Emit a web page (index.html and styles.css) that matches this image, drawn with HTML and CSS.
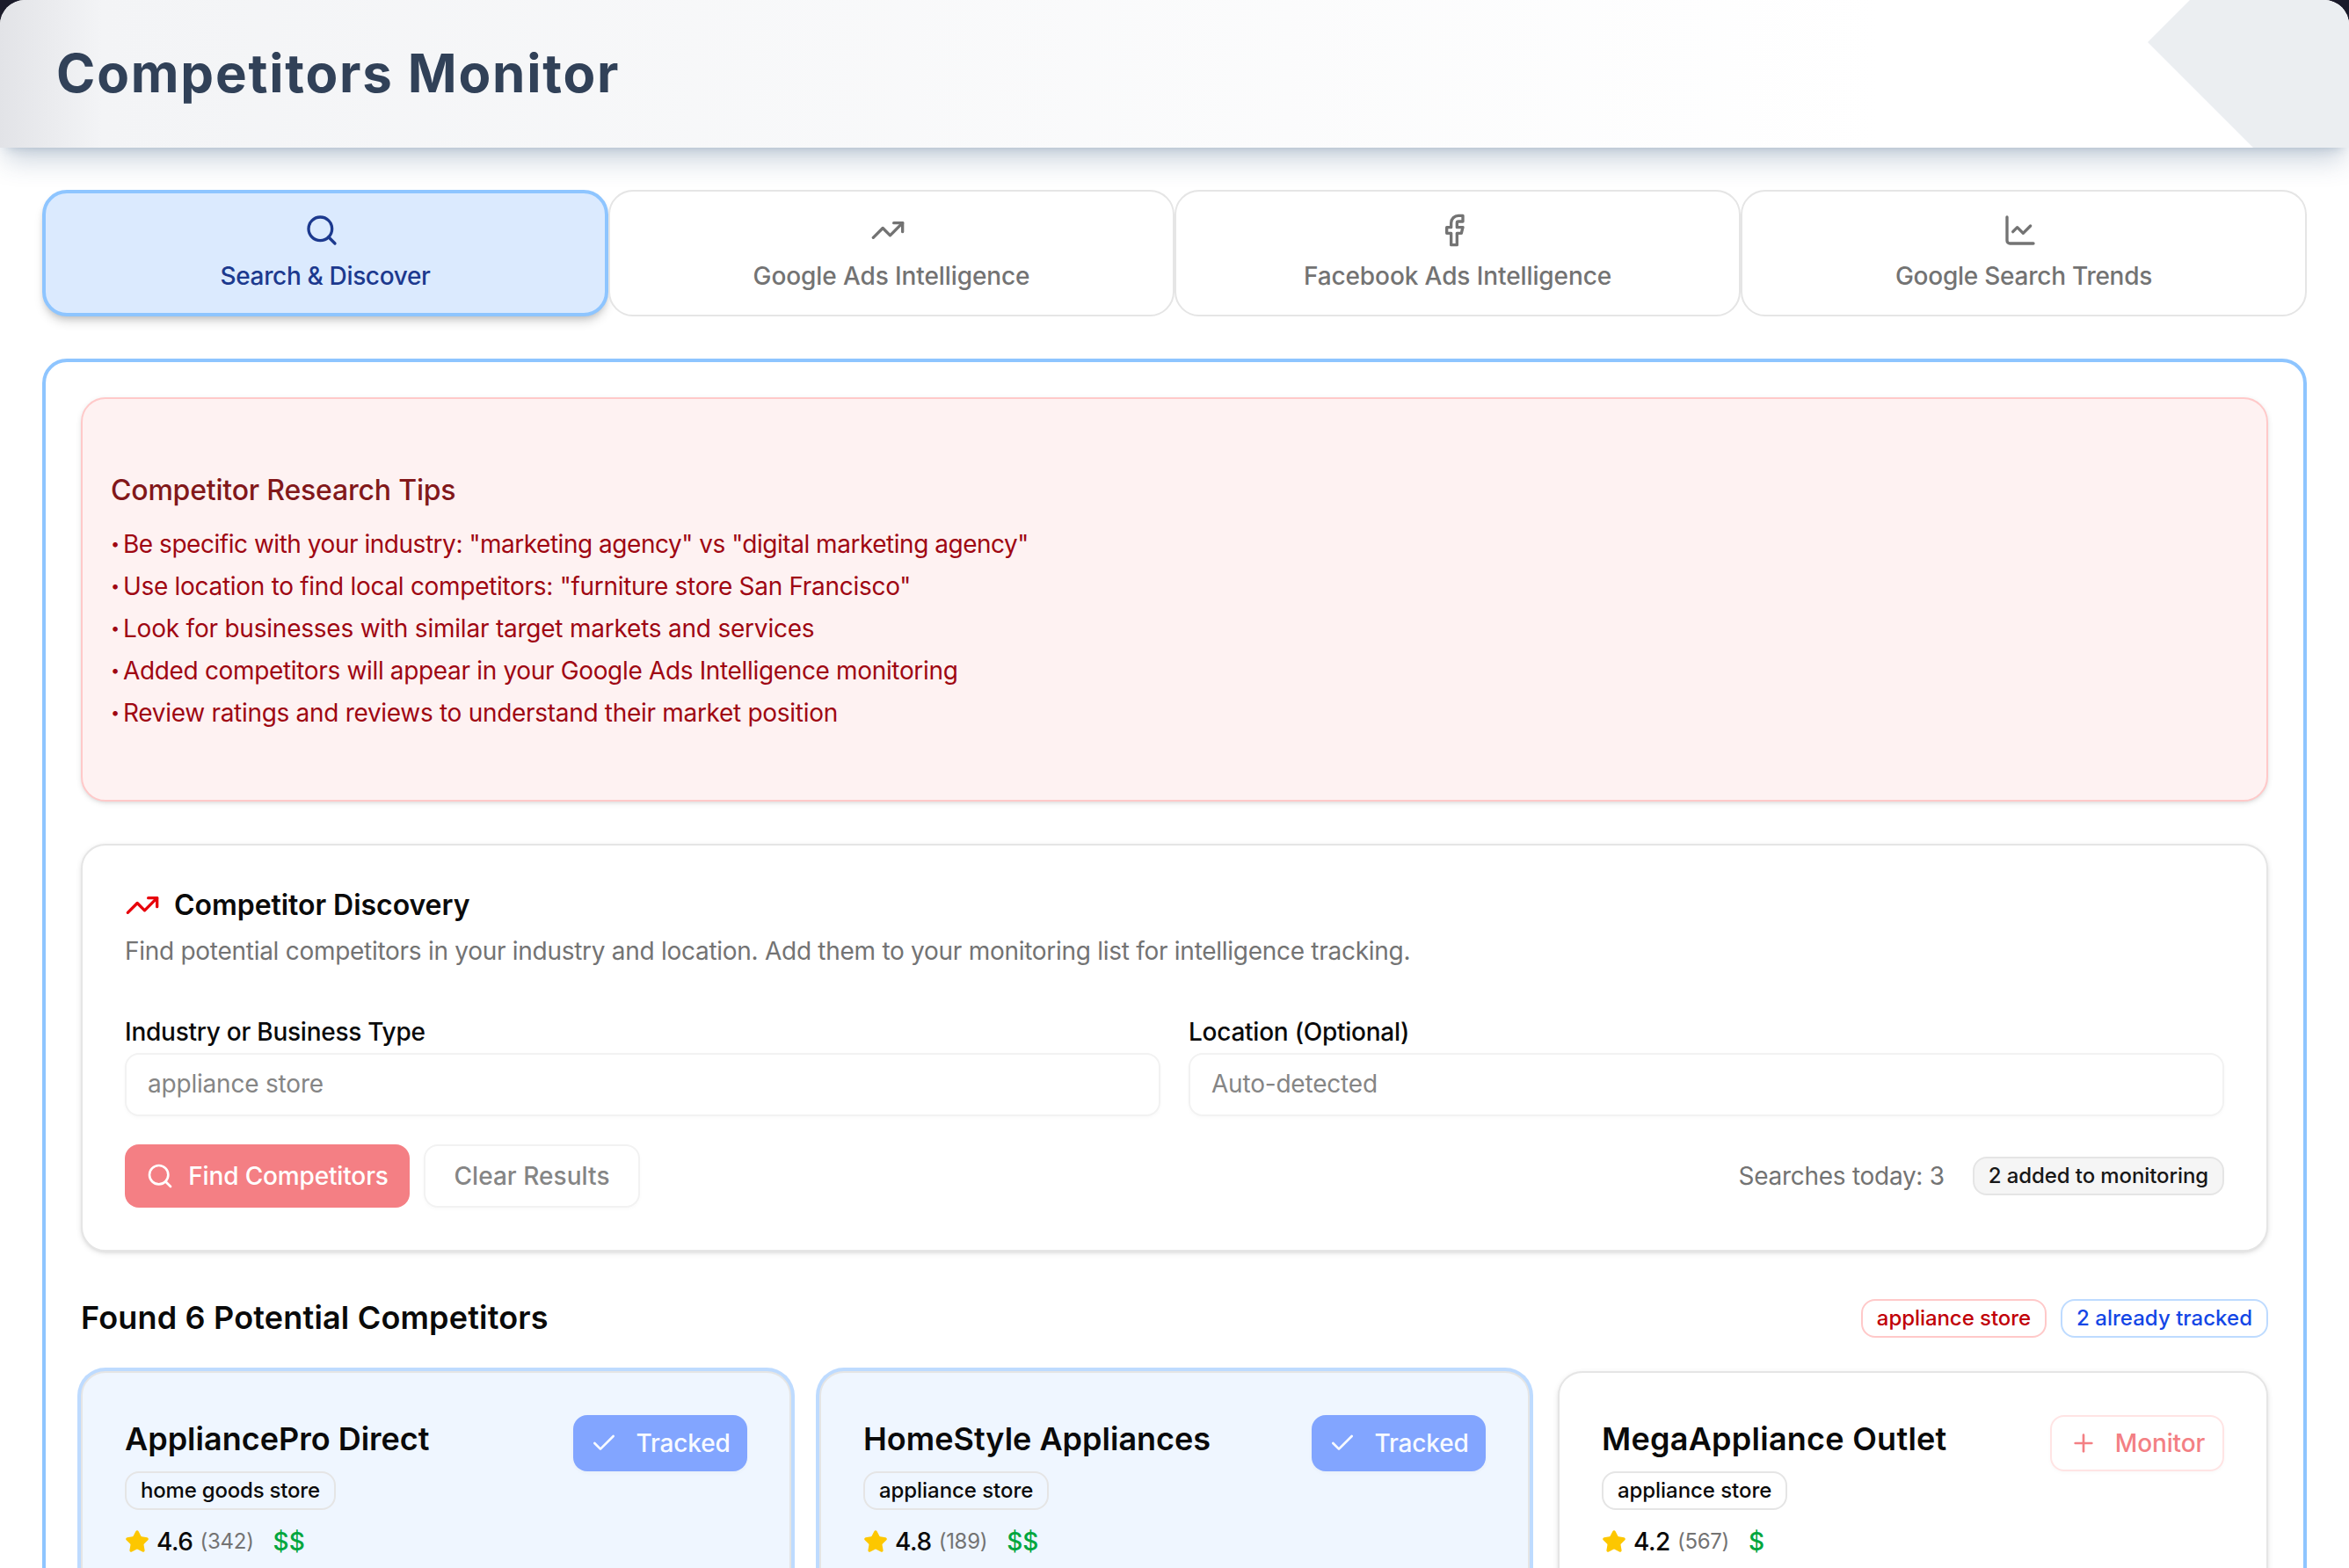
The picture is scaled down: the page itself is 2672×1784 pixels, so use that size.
FILE: index.html
```html
<!DOCTYPE html>
<html lang="en">
<head>
    <meta charset="UTF-8">
    <meta name="viewport" content="width=device-width, initial-scale=1.0">
    <title>Competitors Monitor</title>
    <link rel="stylesheet" href="styles.css">
</head>
<body>
<div class="page">
    <header class="header">
        <h1>Competitors Monitor</h1>
        <div class="header-shape"></div>
    </header>

    <main class="main">
        <nav class="tabs">
            <button class="tab active">
                <svg class="icon" viewBox="0 0 24 24"><circle cx="11" cy="11" r="8"/><path d="m21 21-4.34-4.34"/></svg>
                <span>Search &amp; Discover</span>
            </button>
            <button class="tab">
                <svg class="icon" viewBox="0 0 24 24"><path d="M16 7h6v6"/><path d="m22 7-8.5 8.5-5-5L2 17"/></svg>
                <span>Google Ads Intelligence</span>
            </button>
            <button class="tab">
                <svg class="icon" viewBox="0 0 24 24"><path d="M18 2h-3a5 5 0 0 0-5 5v3H7v4h3v8h4v-8h3l1-4h-4V7a1 1 0 0 1 1-1h3z"/></svg>
                <span>Facebook Ads Intelligence</span>
            </button>
            <button class="tab tab-trends">
                <svg class="icon" viewBox="0 0 24 24"><path d="M3 3v16a2 2 0 0 0 2 2h16"/><path d="m19 9-5 5-4-4-3 3"/></svg>
                <span>Google Search Trends</span>
            </button>
        </nav>

        <section class="panel">
            <div class="tips">
                <h2>Competitor Research Tips</h2>
                <ul>
                    <li class="tip-1"><span class="dot">•</span>Be specific with your industry: "marketing agency" vs "digital marketing agency"</li>
                    <li class="tip-2"><span class="dot">•</span>Use location to find local competitors: "furniture store San Francisco"</li>
                    <li class="tip-3"><span class="dot">•</span>Look for businesses with similar target markets and services</li>
                    <li class="tip-4"><span class="dot">•</span>Added competitors will appear in your Google Ads Intelligence monitoring</li>
                    <li class="tip-5"><span class="dot">•</span>Review ratings and reviews to understand their market position</li>
                </ul>
            </div>

            <div class="card discovery">
                <div class="discovery-title">
                    <svg class="icon" viewBox="0 0 24 24"><path d="M16 7h6v6"/><path d="m22 7-8.5 8.5-5-5L2 17"/></svg>
                    <h3>Competitor Discovery</h3>
                </div>
                <p class="discovery-text">Find potential competitors in your industry and location. Add them to your monitoring list for intelligence tracking.</p>
                <div class="fields">
                    <div class="field">
                        <label for="industry">Industry or Business Type</label>
                        <input id="industry" type="text" value="appliance store" disabled>
                    </div>
                    <div class="field">
                        <label for="location">Location (Optional)</label>
                        <input id="location" type="text" value="Auto-detected" disabled>
                    </div>
                </div>
                <div class="actions">
                    <button class="btn btn-find">
                        <svg class="icon small" viewBox="0 0 24 24"><circle cx="11" cy="11" r="8"/><path d="m21 21-4.34-4.34"/></svg>
                        <span>Find Competitors</span>
                    </button>
                    <button class="btn btn-clear"><span>Clear Results</span></button>
                    <span class="searches">Searches today: 3</span>
                    <span class="badge gray">2 added to monitoring</span>
                </div>
            </div>

            <div class="results-header">
                <h2>Found 6 Potential Competitors</h2>
                <div class="results-badges">
                    <span class="badge red">appliance store</span>
                    <span class="badge blue">2 already tracked</span>
                </div>
            </div>

            <div class="results">
                <div class="card result tracked">
                    <div class="result-info">
                        <h3>AppliancePro Direct</h3>
                        <span class="badge goods">home goods store</span>
                        <div class="rating">
                            <svg class="star" viewBox="0 0 24 24"><path d="M11.525 2.295a.53.53 0 0 1 .95 0l2.31 4.679a2.123 2.123 0 0 0 1.595 1.16l5.166.756a.53.53 0 0 1 .294.904l-3.736 3.638a2.123 2.123 0 0 0-.611 1.878l.882 5.14a.53.53 0 0 1-.771.56l-4.618-2.428a2.122 2.122 0 0 0-1.973 0L6.396 21.01a.53.53 0 0 1-.77-.56l.881-5.139a2.122 2.122 0 0 0-.611-1.879L2.16 9.795a.53.53 0 0 1 .294-.906l5.165-.755a2.122 2.122 0 0 0 1.597-1.16z"/></svg>
                            <span class="score">4.6</span>
                            <span class="count">(342)</span>
                            <span class="price">$$</span>
                        </div>
                    </div>
                    <button class="btn btn-tracked">
                        <svg class="icon small" viewBox="0 0 24 24"><path d="M20 6 9 17l-5-5"/></svg>
                        <span>Tracked</span>
                    </button>
                </div>

                <div class="card result tracked">
                    <div class="result-info">
                        <h3>HomeStyle Appliances</h3>
                        <span class="badge">appliance store</span>
                        <div class="rating">
                            <svg class="star" viewBox="0 0 24 24"><path d="M11.525 2.295a.53.53 0 0 1 .95 0l2.31 4.679a2.123 2.123 0 0 0 1.595 1.16l5.166.756a.53.53 0 0 1 .294.904l-3.736 3.638a2.123 2.123 0 0 0-.611 1.878l.882 5.14a.53.53 0 0 1-.771.56l-4.618-2.428a2.122 2.122 0 0 0-1.973 0L6.396 21.01a.53.53 0 0 1-.77-.56l.881-5.139a2.122 2.122 0 0 0-.611-1.879L2.16 9.795a.53.53 0 0 1 .294-.906l5.165-.755a2.122 2.122 0 0 0 1.597-1.16z"/></svg>
                            <span class="score">4.8</span>
                            <span class="count">(189)</span>
                            <span class="price">$$</span>
                        </div>
                    </div>
                    <button class="btn btn-tracked">
                        <svg class="icon small" viewBox="0 0 24 24"><path d="M20 6 9 17l-5-5"/></svg>
                        <span>Tracked</span>
                    </button>
                </div>

                <div class="card result">
                    <div class="result-info">
                        <h3 class="wide">MegaAppliance Outlet</h3>
                        <span class="badge">appliance store</span>
                        <div class="rating">
                            <svg class="star" viewBox="0 0 24 24"><path d="M11.525 2.295a.53.53 0 0 1 .95 0l2.31 4.679a2.123 2.123 0 0 0 1.595 1.16l5.166.756a.53.53 0 0 1 .294.904l-3.736 3.638a2.123 2.123 0 0 0-.611 1.878l.882 5.14a.53.53 0 0 1-.771.56l-4.618-2.428a2.122 2.122 0 0 0-1.973 0L6.396 21.01a.53.53 0 0 1-.77-.56l.881-5.139a2.122 2.122 0 0 0-.611-1.879L2.16 9.795a.53.53 0 0 1 .294-.906l5.165-.755a2.122 2.122 0 0 0 1.597-1.16z"/></svg>
                            <span class="score">4.2</span>
                            <span class="count">(567)</span>
                            <span class="price">$</span>
                        </div>
                    </div>
                    <button class="btn btn-monitor">
                        <svg class="icon small" viewBox="0 0 24 24"><path d="M5 12h14"/><path d="M12 5v14"/></svg>
                        <span>Monitor</span>
                    </button>
                </div>
            </div>
        </section>
    </main>
</div>
</body>
</html>
```
FILE: styles.css
```css
* {
    box-sizing: border-box;
    margin: 0;
    padding: 0;
}

body {
    height: 1784px;
    overflow: hidden;
    background: #1b1b2a;
    font-family: Inter, "Liberation Sans", sans-serif;
    font-size: 28px;
    line-height: 40px;
    color: #0a0a0a;
}

button,
input {
    font: inherit;
    letter-spacing: inherit;
}

.page {
    height: 1784px;
    overflow: hidden;
    background: #fff;
    border-radius: 28px 28px 0 0;
}

.icon {
    width: 40px;
    height: 40px;
    flex-shrink: 0;
    fill: none;
    stroke: currentColor;
    stroke-width: 2;
    stroke-linecap: round;
    stroke-linejoin: round;
}

.icon.small {
    width: 32px;
    height: 32px;
}

/* header */
.header {
    display: flex;
    justify-content: space-between;
    height: 168px;
    padding-left: 64px;
    border-radius: 28px 28px 0 0;
    background: linear-gradient(90deg, #e2e3e7 0, #f3f4f6 116px, #fff 80%);
    box-shadow: 0 20px 30px -6px rgba(49, 85, 125, 0.25), 0 8px 12px -8px rgba(49, 85, 125, 0.25);
    overflow: hidden;
}

.header h1 {
    font-size: 60px;
    line-height: 72px;
    font-weight: 700;
    letter-spacing: 1.8px;
    color: #314158;
    padding-top: 47px;
}

.header-shape {
    width: 229px;
    background: #ebeef1;
    clip-path: polygon(48px 0, 100% 0, 100% 100%, 120px 100%, 0 48px);
}

.main {
    padding: 48px 48px 0;
}

/* tabs */
.tabs {
    display: grid;
    grid-template-columns: repeat(4, 1fr);
    margin-bottom: 48px;
}

.tab {
    display: flex;
    flex-direction: column;
    align-items: center;
    justify-content: center;
    gap: 12px;
    height: 144px;
    border: 2px solid #e5e5e5;
    border-radius: 28px;
    background: #fff;
    color: #737373;
    font-weight: 500;
    letter-spacing: -0.1px;
}

.tab .icon {
    margin-right: 8px;
}

.tab.active {
    border: 4px solid #8ec5ff;
    background: #dbeafe;
    color: #1c398e;
    letter-spacing: -0.35px;
    box-shadow: 0 8px 12px -2px rgba(0, 0, 0, 0.15), 0 4px 8px -4px rgba(0, 0, 0, 0.2);
}

.tab-trends {
    letter-spacing: -0.25px;
}

.panel {
    height: 1500px;
    padding: 40px;
    border: 4px solid #8ec5ff;
    border-radius: 28px;
}

/* research tips */
.tips {
    height: 460px;
    padding: 80px 32px 0;
    border: 2px solid #ffc9c9;
    border-radius: 28px;
    background: #fef2f2;
    box-shadow: 0 2px 6px rgba(0, 0, 0, 0.1), 0 2px 4px -2px rgba(0, 0, 0, 0.1);
    color: #9f0712;
}

.tips h2 {
    font-size: 32px;
    line-height: 48px;
    font-weight: 500;
    letter-spacing: -0.2px;
    color: #82181a;
}

.tips ul {
    display: flex;
    flex-direction: column;
    gap: 8px;
    margin-top: 17px;
    list-style: none;
}

.tips li {
    display: flex;
    letter-spacing: -0.3px;
}

.tips .tip-1 {
    letter-spacing: -0.47px;
}

.tips .tip-3 {
    letter-spacing: -0.22px;
}

.tips .tip-4 {
    letter-spacing: -0.34px;
}

.dot {
    width: 14px;
    font-size: 18px;
}

.card {
    border: 2px solid #e5e5e5;
    border-radius: 28px;
    background: #fff;
    padding: 48px;
    box-shadow: 0 2px 6px rgba(0, 0, 0, 0.1), 0 2px 4px -2px rgba(0, 0, 0, 0.1);
}

/* discovery form */
.discovery {
    margin-top: 48px;
}

.discovery-title {
    display: flex;
    align-items: center;
    gap: 16px;
    color: #e7000b;
}

.discovery-title h3 {
    font-size: 32px;
    line-height: 40px;
    font-weight: 600;
    letter-spacing: -0.05px;
    color: #0a0a0a;
}

.discovery-text {
    margin-top: 12px;
    letter-spacing: -0.28px;
    color: #737373;
}

.fields {
    display: grid;
    grid-template-columns: 1fr 1fr;
    gap: 32px;
    margin-top: 52px;
}

.field label {
    display: block;
    margin-bottom: 4px;
    font-weight: 500;
    letter-spacing: -0.25px;
}

.field input {
    display: block;
    width: 100%;
    height: 72px;
    padding: 0 24px 2px;
    border: 2px solid #f2f2f2;
    border-radius: 16px;
    background: #fff;
    color: #858585;
    letter-spacing: -0.2px;
    box-shadow: 0 2px 4px rgba(0, 0, 0, 0.025);
}

.actions {
    display: flex;
    align-items: center;
    margin-top: 32px;
}

.btn {
    display: flex;
    align-items: center;
    justify-content: center;
    flex-shrink: 0;
    border: none;
    border-radius: 16px;
    font-weight: 500;
    white-space: nowrap;
}

.btn-find {
    width: 324px;
    height: 72px;
    gap: 16px;
    background: #f47f84;
    color: #fff;
    letter-spacing: -0.15px;
}

.btn-clear {
    width: 246px;
    height: 72px;
    margin-left: 16px;
    border: 2px solid #f2f2f2;
    background: #fff;
    color: #858585;
    letter-spacing: 0.05px;
    box-shadow: 0 2px 4px rgba(0, 0, 0, 0.025);
}

.searches {
    margin-left: auto;
    margin-right: 32px;
    letter-spacing: -0.28px;
    color: #737373;
}

.badge {
    display: inline-flex;
    align-items: center;
    height: 44px;
    padding: 0 16px;
    border: 2px solid #e5e5e5;
    border-radius: 16px;
    font-size: 24px;
    line-height: 32px;
    font-weight: 500;
    letter-spacing: -0.06px;
    white-space: nowrap;
}

.badge.gray {
    background: #f5f5f5;
    color: #171717;
    letter-spacing: -0.1px;
}

.badge.red {
    border-color: #ffc9c9;
    color: #c10007;
}

.badge.blue {
    border-color: #bedbff;
    color: #1447e6;
    letter-spacing: 0.03px;
}

.badge.goods {
    letter-spacing: -0.2px;
}

/* results */
.results-header {
    display: flex;
    align-items: center;
    justify-content: space-between;
    height: 56px;
    margin: 48px 0 32px;
}

.results-header h2 {
    padding-bottom: 2px;
    font-size: 36px;
    line-height: 54px;
    font-weight: 600;
    letter-spacing: 0.18px;
}

.results-badges {
    display: flex;
    gap: 16px;
}

.results {
    display: grid;
    grid-template-columns: repeat(3, 1fr);
    gap: 32px;
}

.result {
    display: flex;
    justify-content: space-between;
    align-items: flex-start;
    height: 460px;
}

.result.tracked {
    background: #eff6ff;
    box-shadow: 0 0 0 4px #bedbff;
}

.result h3 {
    margin-bottom: 10px;
    font-size: 36px;
    line-height: 54px;
    font-weight: 600;
    white-space: nowrap;
}

.result h3.wide {
    letter-spacing: 0.25px;
}

.result .badge {
    display: flex;
    width: fit-content;
}

.rating {
    display: flex;
    align-items: center;
    gap: 8px;
    margin-top: 16px;
}

.star {
    width: 28px;
    height: 28px;
    fill: #fdc700;
    stroke: #fdc700;
    stroke-width: 2;
    stroke-linejoin: round;
}

.score {
    font-weight: 500;
    letter-spacing: -0.4px;
}

.count {
    font-size: 24px;
    letter-spacing: -0.3px;
    color: #737373;
}

.price {
    margin-left: 14px;
    font-weight: 500;
    color: #00a63e;
}

.btn-tracked,
.btn-monitor {
    width: 198px;
    height: 64px;
    gap: 20px;
}

.btn-tracked {
    background: #82a5ff;
    color: #f7faff;
    letter-spacing: -0.15px;
    box-shadow: 0 2px 4px rgba(0, 0, 0, 0.03);
}

.btn-monitor {
    border: 2px solid #ffe4e4;
    background: #fff;
    color: #f38084;
    letter-spacing: -0.15px;
    box-shadow: 0 2px 4px rgba(0, 0, 0, 0.025);
}
```
